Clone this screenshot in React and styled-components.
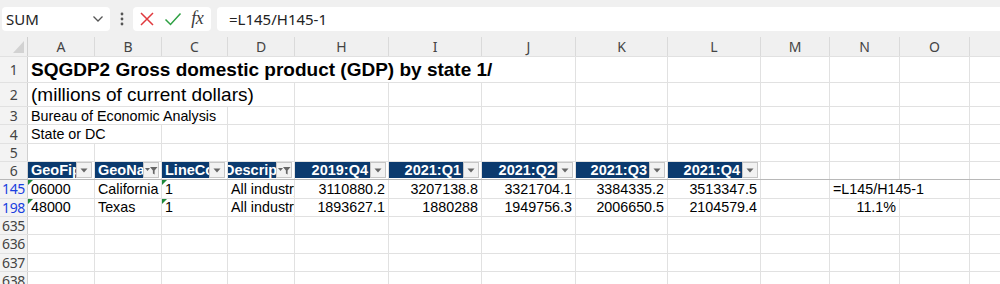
import React from 'react';
import styled, { createGlobalStyle } from 'styled-components';

const GlobalStyle = createGlobalStyle`
  html, body {
    margin: 0;
    padding: 0;
    background: #ffffff;
  }
  body {
    width: 1000px;
    height: 284px;
    overflow: hidden;
    font-family: "Liberation Sans", Arial, sans-serif;
  }
`;

const GRID = '#e1e1e1';
const NAVY = '#0b3a6e';

const columns = [
  { key: 'A', width: 67 },
  { key: 'B', width: 67 },
  { key: 'C', width: 66 },
  { key: 'D', width: 67 },
  { key: 'H', width: 94 },
  { key: 'I', width: 93 },
  { key: 'J', width: 94 },
  { key: 'K', width: 92 },
  { key: 'L', width: 93 },
  { key: 'M', width: 69 },
  { key: 'N', width: 70 },
  { key: 'O', width: 70 },
  { key: 'P', width: 40 },
];

const widthOf = (from, to) => {
  const a = columns.findIndex(c => c.key === from);
  const b = columns.findIndex(c => c.key === to);
  return columns.slice(a, b + 1).reduce((s, c) => s + c.width, 0);
};

/* ---------- formula bar ---------- */

const FormulaBar = styled.div`
  height: 37px;
  background: #f0f0f0;
  display: flex;
  align-items: center;
  padding-left: 2px;
  box-sizing: border-box;
  font-family: "Noto Sans", "Open Sans", sans-serif;
`;

const NameBox = styled.div`
  width: 108px;
  height: 24px;
  background: #fff;
  border-radius: 4px;
  box-sizing: border-box;
  display: flex;
  align-items: center;
  justify-content: space-between;
  padding: 0 6px 0 4px;
  font-size: 15px;
  color: #222;
`;

const Dots = styled.div`
  width: 23px;
  display: flex;
  justify-content: center;
`;

const IconGroup = styled.div`
  width: 78px;
  height: 24px;
  background: #fff;
  border-radius: 4px;
  display: flex;
  align-items: center;
  justify-content: space-around;
  padding: 0 3px 0 2px;
  box-sizing: border-box;
`;

const Fx = styled.span`
  font-family: "Liberation Serif", "Times New Roman", serif;
  font-style: italic;
  font-size: 18px;
  color: #3a3a3a;
  letter-spacing: -0.3px;
`;

const FormulaInput = styled.div`
  flex: 1;
  height: 24px;
  margin-left: 6px;
  background: #fff;
  border-radius: 4px 0 0 4px;
  display: flex;
  align-items: center;
  padding-left: 12px;
  font-size: 15px;
  color: #222;
`;

/* ---------- sheet ---------- */

const Sheet = styled.div`
  display: flex;
  flex-direction: column;
`;

const Row = styled.div`
  display: flex;
  height: ${p => p.$h}px;
  flex: none;
  border-bottom: 1px solid ${p => (p.$freeze ? '#b8b8b8' : GRID)};
  box-sizing: border-box;
`;

const Corner = styled.div`
  width: 28px;
  flex: none;
  background: #f0f0f0;
  border-right: 1px solid #d0d0d0;
  box-sizing: border-box;
  display: flex;
  align-items: flex-end;
  justify-content: flex-end;
  padding: 0 3px 3px 0;
`;

const ColHead = styled.div`
  width: ${p => p.$w}px;
  flex: none;
  background: #f0f0f0;
  border-right: 1px solid #dadada;
  box-sizing: border-box;
  display: flex;
  align-items: center;
  justify-content: center;
  font-family: "Noto Sans", "Open Sans", sans-serif;
  font-size: 14px;
  color: #444;
`;

const RowHead = styled.div`
  width: 28px;
  flex: none;
  background: #f3f3f3;
  border-right: 1px solid #d0d0d0;
  box-sizing: border-box;
  display: flex;
  align-items: center;
  justify-content: center;
  font-family: "Noto Sans", "Open Sans", sans-serif;
  font-size: 14px;
  letter-spacing: -0.3px;
  color: ${p => (p.$filtered ? '#1a3fe0' : '#444')};
`;

const Cell = styled.div`
  position: relative;
  width: ${p => p.$w}px;
  flex: none;
  border-right: 1px solid ${GRID};
  box-sizing: border-box;
  display: flex;
  align-items: center;
  justify-content: ${p => (p.$right ? 'flex-end' : 'flex-start')};
  padding: 0 3px;
  white-space: nowrap;
  overflow: hidden;
  font-size: ${p => p.$size || 14.3}px;
  font-weight: ${p => (p.$bold ? 700 : 400)};
  color: #000;

  ${p =>
    p.$flag &&
    `
    &::before {
      content: '';
      position: absolute;
      left: 0;
      top: 0;
      border-top: 5px solid #1e8a3a;
      border-right: 5px solid transparent;
    }
  `}
`;

const HeadCell = styled.div`
  width: ${p => p.$w}px;
  flex: none;
  border-right: 1px solid ${GRID};
  box-sizing: border-box;
  display: flex;
  align-items: stretch;
  padding: 0 2px 1px 0;
`;

const HeadFill = styled.div`
  flex: 1;
  min-width: 0;
  background: ${NAVY};
  color: #fff;
  font-weight: 700;
  font-size: 14.5px;
  display: flex;
  align-items: center;
  justify-content: ${p => (p.$right ? 'flex-end' : 'flex-start')};
  padding: ${p => (p.$right ? '0 2px 0 0' : '0 0 0 3px')};
  white-space: nowrap;
  overflow: hidden;
  text-indent: ${p => p.$indent || 0}px;
`;

const FilterButton = styled.div`
  width: 16px;
  flex: none;
  background: #f2f2f2;
  border: 1px solid #c6c6c6;
  box-sizing: border-box;
  display: flex;
  align-items: center;
  justify-content: center;
`;

/* ---------- icons ---------- */

const Chevron = () => (
  <svg width="12" height="8" viewBox="0 0 12 8">
    <path d="M1.5 1.5 L6 6 L10.5 1.5" fill="none" stroke="#555" strokeWidth="1.3" />
  </svg>
);

const VDots = () => (
  <svg width="4" height="16" viewBox="0 0 4 16">
    <circle cx="2" cy="3" r="1.4" fill="#555" />
    <circle cx="2" cy="8" r="1.4" fill="#555" />
    <circle cx="2" cy="13" r="1.4" fill="#555" />
  </svg>
);

const Cross = () => (
  <svg width="16" height="16" viewBox="0 0 16 16">
    <path d="M2 2 L14 14 M14 2 L2 14" stroke="#e0393e" strokeWidth="1.5" fill="none" />
  </svg>
);

const Check = () => (
  <svg width="18" height="16" viewBox="0 0 18 16">
    <path d="M1.5 8.5 L6.5 13.5 L16.5 2.5" stroke="#2ea043" strokeWidth="1.5" fill="none" />
  </svg>
);

const SelectAll = () => (
  <svg width="11" height="12" viewBox="0 0 11 12">
    <path d="M11 0 L11 12 L0 12 Z" fill="#d2d2d2" />
  </svg>
);

const DropArrow = () => (
  <svg width="8" height="5" viewBox="0 0 8 5">
    <path d="M0.5 0.5 L7.5 0.5 L4 4.5 Z" fill="#666" />
  </svg>
);

const FunnelArrow = () => (
  <svg width="13" height="9" viewBox="0 0 13 9">
    <path d="M0 2 L5 2 L2.5 5 Z" fill="#666" />
    <path d="M5 1 L12.5 1 L9.6 4.6 L9.6 8.5 L7.9 7.6 L7.9 4.6 Z" fill="#666" />
  </svg>
);

/* ---------- data ---------- */

const headers = [
  { key: 'A', label: 'GeoFips' },
  { key: 'B', label: 'GeoName', filtered: true },
  { key: 'C', label: 'LineCode' },
  { key: 'D', label: 'Description', filtered: true, indent: -7 },
  { key: 'H', label: '2019:Q4', right: true },
  { key: 'I', label: '2021:Q1', right: true },
  { key: 'J', label: '2021:Q2', right: true },
  { key: 'K', label: '2021:Q3', right: true },
  { key: 'L', label: '2021:Q4', right: true },
];

const records = [
  {
    row: 145,
    fips: '06000',
    name: 'California',
    values: ['3110880.2', '3207138.8', '3321704.1', '3384335.2', '3513347.5'],
    formula: '=L145/H145-1',
  },
  {
    row: 198,
    fips: '48000',
    name: 'Texas',
    values: ['1893627.1', '1880288', '1949756.3', '2006650.5', '2104579.4'],
    result: '11.1%',
  },
];

const ROW_H = 18.33;

const EmptyCells = ({ from }) =>
  columns.slice(columns.findIndex(c => c.key === from)).map(c => <Cell key={c.key} $w={c.width} />);

const TextRow = ({ num, text, to, size, bold, h }) => (
  <Row $h={h}>
    <RowHead>{num}</RowHead>
    <Cell $w={widthOf('A', to)} $size={size} $bold={bold}>
      {text}
    </Cell>
    <EmptyCells from={columns[columns.findIndex(c => c.key === to) + 1].key} />
  </Row>
);

const DataRow = ({ rec }) => (
  <Row $h={ROW_H}>
    <RowHead $filtered>{rec.row}</RowHead>
    <Cell $w={widthOf('A', 'A')} $flag>{rec.fips}</Cell>
    <Cell $w={widthOf('B', 'B')}>{rec.name}</Cell>
    <Cell $w={widthOf('C', 'C')} $flag>1</Cell>
    <Cell $w={widthOf('D', 'D')}>All industry total</Cell>
    {rec.values.map((v, i) => (
      <Cell key={i} $w={columns[4 + i].width} $right>
        {v}
      </Cell>
    ))}
    <Cell $w={widthOf('M', 'M')} />
    {rec.formula ? (
      <Cell $w={widthOf('N', 'O')}>{rec.formula}</Cell>
    ) : (
      <>
        <Cell $w={widthOf('N', 'N')} $right>{rec.result}</Cell>
        <Cell $w={widthOf('O', 'O')} />
      </>
    )}
    <Cell $w={widthOf('P', 'P')} />
  </Row>
);

const EmptyRow = ({ num }) => (
  <Row $h={ROW_H}>
    <RowHead>{num}</RowHead>
    <EmptyCells from="A" />
  </Row>
);

export default function App() {
  return (
    <>
      <GlobalStyle />
      <FormulaBar>
        <NameBox>
          SUM
          <Chevron />
        </NameBox>
        <Dots>
          <VDots />
        </Dots>
        <IconGroup>
          <Cross />
          <Check />
          <Fx>fx</Fx>
        </IconGroup>
        <FormulaInput>=L145/H145-1</FormulaInput>
      </FormulaBar>

      <Sheet>
        <Row $h={20}>
          <Corner>
            <SelectAll />
          </Corner>
          {columns.map(c => (
            <ColHead key={c.key} $w={c.width}>
              {c.key === 'P' ? '' : c.key}
            </ColHead>
          ))}
        </Row>

        <TextRow num={1} h={26} to="J" size={19} bold text="SQGDP2 Gross domestic product (GDP) by state 1/" />
        <TextRow num={2} h={24} to="D" size={19} text="(millions of current dollars)" />
        <TextRow num={3} h={ROW_H} to="C" text="Bureau of Economic Analysis" />
        <TextRow num={4} h={ROW_H} to="B" text="State or DC" />
        <EmptyRow num={5} />

        <Row $h={ROW_H} $freeze>
          <RowHead>6</RowHead>
          {headers.map(h => (
            <HeadCell key={h.key} $w={widthOf(h.key, h.key)}>
              <HeadFill $right={h.right} $indent={h.indent}>
                {h.label}
              </HeadFill>
              <FilterButton>{h.filtered ? <FunnelArrow /> : <DropArrow />}</FilterButton>
            </HeadCell>
          ))}
          <EmptyCells from="M" />
        </Row>

        {records.map(r => (
          <DataRow key={r.row} rec={r} />
        ))}
        {[635, 636, 637, 638].map(n => (
          <EmptyRow key={n} num={n} />
        ))}
      </Sheet>
    </>
  );
}
